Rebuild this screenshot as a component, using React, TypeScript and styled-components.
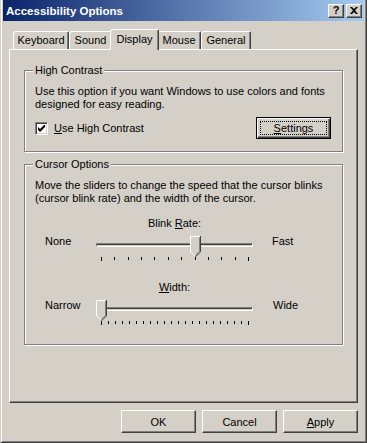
import styled, { createGlobalStyle } from "styled-components";

const GlobalStyle = createGlobalStyle`
  html, body {
    margin: 0;
    padding: 0;
    background: #d4d0c8;
  }
  body {
    font-family: "Liberation Sans", Arial, sans-serif;
    font-size: 11px;
    color: #000;
  }
`;

const Window = styled.div`
  box-sizing: border-box;
  width: 367px;
  height: 443px;
  display: flex;
  flex-direction: column;
  background: #d4d0c8;
  border: 1px solid;
  border-top-width: 0;
  border-color: #d4d0c8 #404040 #404040 #d4d0c8;
  box-shadow: inset 1px 0 #fff, inset -1px -1px #808080;
  padding: 0 2px 2px 2px;
`;

const TitleBar = styled.div`
  height: 21px;
  flex: none;
  display: flex;
  align-items: center;
  justify-content: space-between;
  padding: 0 2px 0 3px;
  background: linear-gradient(to right, #0a246a, #a6caf0);
`;

const Title = styled.span`
  color: #fff;
  font-weight: bold;
  font-size: 11.5px;
`;

const CaptionButtons = styled.div`
  display: flex;
  gap: 2px;
`;

const CaptionButton = styled.div`
  box-sizing: border-box;
  width: 16px;
  height: 14px;
  display: flex;
  align-items: center;
  justify-content: center;
  background: #d4d0c8;
  border: 1px solid;
  border-color: #fff #404040 #404040 #fff;
  box-shadow: inset -1px -1px #808080;
  font-weight: bold;
  font-size: 11px;
  line-height: 11px;
`;

const Body = styled.div`
  flex: 1;
  display: flex;
  flex-direction: column;
  padding: 8px 6px 7px 6px;
`;

const TabStrip = styled.div`
  height: 20px;
  flex: none;
  display: flex;
  align-items: flex-end;
  padding-left: 4px;
`;

const Tab = styled.div<{ $active?: boolean; $w: number }>`
  position: relative;
  z-index: ${(p) => (p.$active ? 1 : 0)};
  box-sizing: border-box;
  width: ${(p) => p.$w + (p.$active ? 4 : 0)}px;
  height: ${(p) => (p.$active ? 21 : 18)}px;
  margin: 0 ${(p) => (p.$active ? -2 : 0)}px ${(p) => (p.$active ? -1 : 0)}px;
  padding-top: ${(p) => (p.$active ? 3 : 2)}px;
  text-align: center;
  line-height: 13px;
  background: #d4d0c8;
  border-top: 1px solid #fff;
  border-left: 1px solid #fff;
  border-right: 1px solid #404040;
  border-radius: 3px 2px 0 0;
  box-shadow: inset -1px 0 #808080;
`;

const Panel = styled.div`
  flex: 1;
  display: flex;
  flex-direction: column;
  gap: 12px;
  padding: 20px 14px 0 14px;
  border: 1px solid;
  border-color: #fff #404040 #404040 #fff;
  box-shadow: inset -1px -1px #808080;
`;

const GroupBox = styled.div<{ $bottom: number }>`
  border: 1px solid #808080;
  box-shadow: inset 1px 1px #fff, 1px 1px #fff;
  padding: 0 11px ${(p) => p.$bottom}px 10px;
`;

const GroupTitle = styled.div`
  width: fit-content;
  margin: -7px 0 0 -2px;
  padding: 0 2px;
  line-height: 13px;
  background: #d4d0c8;
`;

const Text = styled.p`
  margin: 8px 0 0;
  line-height: 13px;
`;

const CheckRow = styled.div`
  display: flex;
  align-items: center;
  justify-content: space-between;
  margin-top: 6px;
`;

const CheckLabel = styled.label`
  display: flex;
  align-items: center;
  gap: 6px;
`;

const CheckBox = styled.span`
  box-sizing: border-box;
  width: 13px;
  height: 13px;
  display: flex;
  align-items: center;
  justify-content: center;
  background: #fff;
  border: 1px solid;
  border-color: #808080 #fff #fff #808080;
  box-shadow: inset 1px 1px #404040, inset -1px -1px #d4d0c8;
`;

const Button = styled.div<{ $focused?: boolean }>`
  position: relative;
  box-sizing: border-box;
  width: 75px;
  height: ${(p) => (p.$focused ? 22 : 23)}px;
  display: flex;
  align-items: center;
  justify-content: center;
  background: #d4d0c8;
  border: 1px solid;
  border-color: ${(p) => (p.$focused ? "#000" : "#fff #404040 #404040 #fff")};
  box-shadow: ${(p) =>
    p.$focused
      ? "inset 1px 1px #fff, inset -1px -1px #404040, inset -2px -2px #808080"
      : "inset -1px -1px #808080"};

  &::after {
    content: "";
    display: ${(p) => (p.$focused ? "block" : "none")};
    position: absolute;
    inset: 3px;
    border: 1px dotted #000;
  }
`;

const SliderBlock = styled.div<{ $gap: number }>`
  margin-top: ${(p) => p.$gap}px;
`;

const SliderCaption = styled.div`
  width: 157px;
  margin-left: 61px;
  text-align: center;
  line-height: 13px;
`;

const SliderRow = styled.div`
  display: grid;
  grid-template-columns: 51px 157px 1fr;
  margin: 6px 0 0 10px;
`;

const SideLabel = styled.span<{ $pad?: number }>`
  margin-top: -1px;
  padding-left: ${(p) => p.$pad ?? 0}px;
  line-height: 13px;
`;

const SliderTrack = styled.div`
  position: relative;
  height: 26px;
`;

const Groove = styled.div`
  margin-top: 7px;
  height: 2px;
  border: 1px solid;
  border-color: #808080 #fff #fff #808080;
  box-shadow: inset 0 1px #404040;
`;

const Ticks = styled.svg`
  display: block;
  margin-top: 10px;
`;

const Thumb = styled.svg`
  position: absolute;
  top: 0;
`;

const ButtonRow = styled.div`
  display: flex;
  justify-content: flex-end;
  gap: 6px;
  margin-top: 7px;
`;

const Slider = ({ ticks, value }: { ticks: number; value: number }) => {
  const step = 147 / (ticks - 1);
  return (
    <SliderTrack>
      <Groove />
      <Ticks width="157" height="4">
        {Array.from({ length: ticks }, (_, i) => {
          const x = Math.round(5 + i * step) + 0.5;
          const end = i === 0 || i === ticks - 1;
          return (
            <line key={i} x1={x} x2={x} y1={0} y2={end ? 4 : 3} stroke="#000" />
          );
        })}
      </Ticks>
      <Thumb width="11" height="21" style={{ left: Math.round(value * step) }}>
        <polygon points="0,0 11,0 11,16 5.5,21 0,16" fill="#d4d0c8" />
        <polyline points="0.5,16 0.5,0.5 10,0.5" fill="none" stroke="#fff" />
        <polyline points="0.5,15.5 5,20" fill="none" stroke="#fff" />
        <polyline points="10.5,0 10.5,15.8 5.5,20.8" fill="none" stroke="#404040" />
        <polyline points="9.5,1 9.5,15.3 5.3,19.5" fill="none" stroke="#808080" />
      </Thumb>
    </SliderTrack>
  );
};

const tabs = [
  { name: "Keyboard", w: 56 },
  { name: "Sound", w: 43 },
  { name: "Display", w: 45 },
  { name: "Mouse", w: 44 },
  { name: "General", w: 50 },
];

export default function App() {
  return (
    <>
      <GlobalStyle />
      <Window>
        <TitleBar>
          <Title>Accessibility Options</Title>
          <CaptionButtons>
            <CaptionButton>?</CaptionButton>
            <CaptionButton>
              <svg width="8" height="7" viewBox="0 0 8 7">
                <path d="M0 0h2l2 2 2-2h2L5 3.5 8 7H6L4 5 2 7H0l3-3.5z" fill="#000" />
              </svg>
            </CaptionButton>
          </CaptionButtons>
        </TitleBar>
        <Body>
          <TabStrip>
            {tabs.map((t) => (
              <Tab key={t.name} $w={t.w} $active={t.name === "Display"}>
                {t.name}
              </Tab>
            ))}
          </TabStrip>
          <Panel>
            <GroupBox $bottom={12}>
              <GroupTitle>High Contrast</GroupTitle>
              <Text>
                Use this option if you want Windows to use colors and fonts
                <br />
                designed for easy reading.
              </Text>
              <CheckRow>
                <CheckLabel>
                  <CheckBox>
                    <svg width="7" height="7">
                      <polygon points="0,2 2,4 7,-1 7,2 2,7 0,5" fill="#000" />
                    </svg>
                  </CheckBox>
                  <span>
                    <u>U</u>se High Contrast
                  </span>
                </CheckLabel>
                <Button $focused>
                  <span>
                    <u>S</u>ettings
                  </span>
                </Button>
              </CheckRow>
            </GroupBox>
            <GroupBox $bottom={18}>
              <GroupTitle>Cursor Options</GroupTitle>
              <Text>
                Move the sliders to change the speed that the cursor blinks
                <br />
                (cursor blink rate) and the width of the cursor.
              </Text>
              <SliderBlock $gap={12}>
                <SliderCaption>
                  Blink <u>R</u>ate:
                </SliderCaption>
                <SliderRow>
                  <SideLabel>None</SideLabel>
                  <Slider ticks={12} value={7} />
                  <SideLabel $pad={19}>Fast</SideLabel>
                </SliderRow>
              </SliderBlock>
              <SliderBlock $gap={19}>
                <SliderCaption>
                  <u>W</u>idth:
                </SliderCaption>
                <SliderRow>
                  <SideLabel>Narrow</SideLabel>
                  <Slider ticks={22} value={0} />
                  <SideLabel $pad={20}>Wide</SideLabel>
                </SliderRow>
              </SliderBlock>
            </GroupBox>
          </Panel>
          <ButtonRow>
            <Button>OK</Button>
            <Button>Cancel</Button>
            <Button>
              <span>
                <u>A</u>pply
              </span>
            </Button>
          </ButtonRow>
        </Body>
      </Window>
    </>
  );
}
